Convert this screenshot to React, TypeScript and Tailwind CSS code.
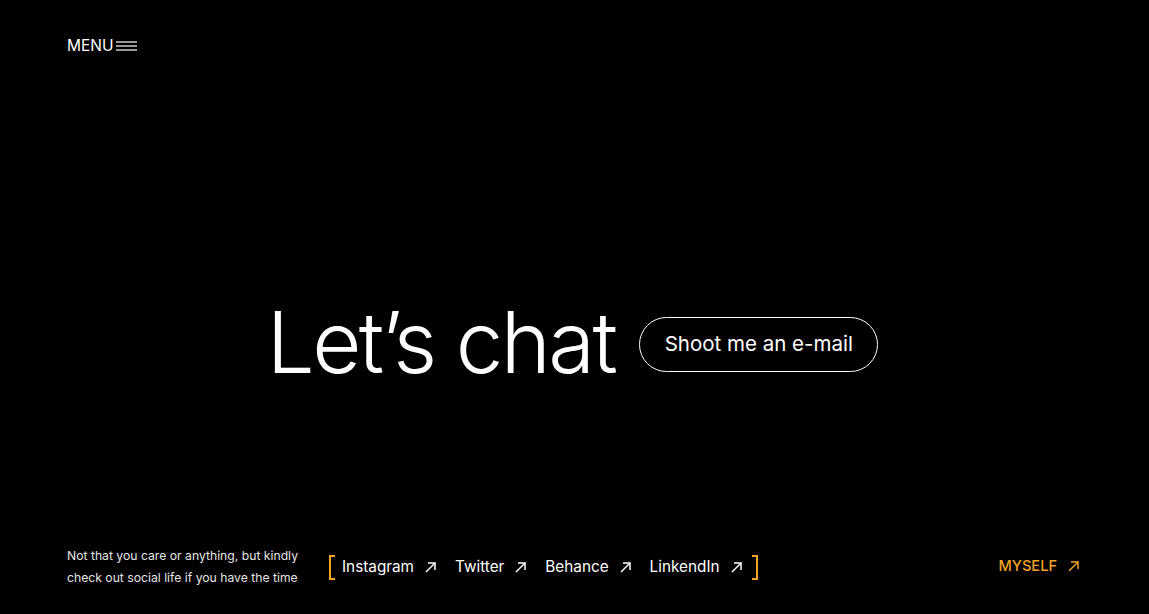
const socials = ["Instagram", "Twitter", "Behance", "LinkendIn"]

function Burger() {
  return (
    <svg width="21" height="10" viewBox="0 0 21 10" className="ml-[2px]">
      <line x1="0" y1="1" x2="21" y2="1" stroke="white" strokeWidth="1.2" />
      <line x1="0" y1="5" x2="21" y2="5" stroke="white" strokeWidth="1.2" />
      <line x1="0" y1="9" x2="21" y2="9" stroke="white" strokeWidth="1.2" />
    </svg>
  )
}

function Arrow() {
  return (
    <svg width="11" height="11" viewBox="0 0 11 11" fill="none" stroke="currentColor" strokeWidth="1.5">
      <path d="M1 10 L10 1" />
      <path d="M3 1 H10 V8" />
    </svg>
  )
}

export default function App() {
  return (
    <div className="h-[614px] w-full bg-black text-white flex flex-col font-['Inter',sans-serif] overflow-hidden">
      {/* header */}
      <header className="px-[67px] pt-[38px] flex items-center">
        <button className="flex items-center text-[15.5px] leading-none">
          MENU
          <Burger />
        </button>
      </header>

      {/* hero */}
      <main className="flex-1 flex items-center justify-center pt-[86px]">
        <div className="flex items-center gap-[24px] mr-[4px]">
          <h1 className="text-[85px] font-light leading-none tracking-[-0.03em]">Let’s chat</h1>
          <a className="h-[55px] w-[239px] rounded-full border border-white flex items-center justify-center text-[20.5px] mt-[4px]">
            Shoot me an e-mail
          </a>
        </div>
      </main>

      {/* footer */}
      <footer className="px-[67px] pb-[25px] flex items-center justify-between">
        <div className="flex items-center">
          <p className="text-[12.2px] leading-[22px] text-neutral-200 w-[250px]">
            Not that you care or anything, but kindly check out social life if you have the time
          </p>
          <div className="ml-[12px] flex items-center">
            <span className="w-[6px] h-[25px] border-2 border-r-0 border-[#f2a326]" />
            <div className="flex items-center gap-[19px] ml-[7px] mr-[10px]">
              {socials.map(s => (
                <a key={s} className="flex items-center gap-[11px] text-[15.3px]">
                  {s}
                  <Arrow />
                </a>
              ))}
            </div>
            <span className="w-[6px] h-[25px] border-2 border-l-0 border-[#f2a326]" />
          </div>
        </div>
        <a className="flex items-center gap-[11px] text-[14.6px] font-medium text-[#f2a326] mr-[3px]">
          MYSELF
          <Arrow />
        </a>
      </footer>
    </div>
  )
}
